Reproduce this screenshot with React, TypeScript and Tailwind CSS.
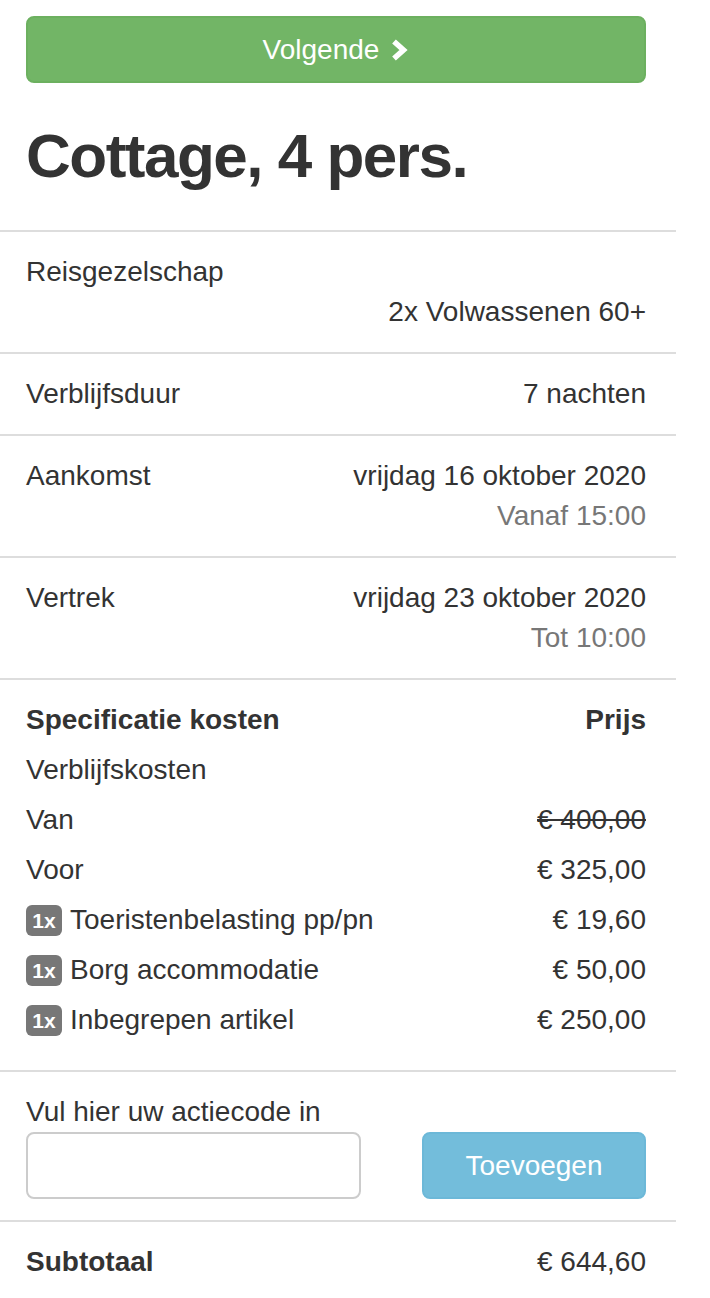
const rows = [
    { label: "Reisgezelschap", value: "2x Volwassenen 60+", stacked: true },
    { label: "Verblijfsduur", value: "7 nachten" },
    { label: "Aankomst", value: "vrijdag 16 oktober 2020", sub: "Vanaf 15:00" },
    { label: "Vertrek", value: "vrijdag 23 oktober 2020", sub: "Tot 10:00" },
];

const costs = [
    { label: "Toeristenbelasting pp/pn", price: "€ 19,60" },
    { label: "Borg accommodatie", price: "€ 50,00" },
    { label: "Inbegrepen artikel", price: "€ 250,00" },
];

function Badge() {
    return (
        <span className="inline-flex items-center justify-center w-[36px] h-[31px] mr-[8px] rounded-[6px] bg-[#777] text-white text-[21px] font-bold leading-none">
            1x
        </span>
    );
}

export default function App() {
    return (
        <div className="w-[676px] bg-white text-[#333] text-[28px] font-['Liberation_Sans','Helvetica_Neue',Arial,sans-serif]">
            <div className="pl-[26px] pr-[30px] pt-[16px]">
                <button className="flex w-full h-[67px] items-center justify-center gap-[10px] rounded-[8px] bg-[#72b566] border-2 border-[#6cb05f] text-white text-[28px]">
                    <span>Volgende</span>
                    <svg width="20" height="24" viewBox="0 0 20 24">
                        <path d="M5 3.5 L14.5 12 L5 20.5" fill="none" stroke="white" strokeWidth="5.5" strokeLinejoin="miter" />
                    </svg>
                </button>
                <h1 className="mt-[39px] mb-[40px] text-[62px] leading-[68px] font-bold tracking-[-1.5px]">Cottage, 4 pers.</h1>
            </div>

            {rows.map((row) => (
                <div key={row.label} className="border-t-2 border-[#ddd] pl-[26px] pr-[30px] py-[20px] leading-[40px]">
                    {row.stacked ? (
                        <>
                            <div>{row.label}</div>
                            <div className="text-right">{row.value}</div>
                        </>
                    ) : (
                        <div className="flex justify-between">
                            <div>{row.label}</div>
                            <div className="text-right">
                                <div>{row.value}</div>
                                {row.sub && <div className="text-[#777]">{row.sub}</div>}
                            </div>
                        </div>
                    )}
                </div>
            ))}

            {/* kosten */}
            <div className="border-t-2 border-[#ddd] pl-[26px] pr-[30px] pt-[15px] pb-[25px] leading-[50px]">
                <div className="flex justify-between font-bold">
                    <span>Specificatie kosten</span>
                    <span>Prijs</span>
                </div>
                <div>Verblijfskosten</div>
                <div className="flex justify-between">
                    <span>Van</span>
                    <span className="line-through">€ 400,00</span>
                </div>
                <div className="flex justify-between">
                    <span>Voor</span>
                    <span>€ 325,00</span>
                </div>
                {costs.map((c) => (
                    <div key={c.label} className="flex justify-between items-center">
                        <span className="flex items-center">
                            <Badge />
                            {c.label}
                        </span>
                        <span>{c.price}</span>
                    </div>
                ))}
            </div>

            <div className="border-t-2 border-[#ddd] pl-[26px] pr-[30px] pt-[20px] pb-[21px]">
                <div className="leading-[40px]">Vul hier uw actiecode in</div>
                <div className="flex justify-between">
                    <input className="w-[335px] h-[67px] rounded-[8px] border-2 border-[#ccc] px-3 outline-none" />
                    <button className="w-[224px] h-[67px] rounded-[8px] bg-[#73bddb] border-2 border-[#6cb8d8] text-white text-[28px]">
                        Toevoegen
                    </button>
                </div>
            </div>

            <div className="border-t-2 border-[#ddd] pl-[26px] pr-[30px] pt-[20px] pb-[16px] leading-[40px] flex justify-between">
                <span className="font-bold">Subtotaal</span>
                <span>€ 644,60</span>
            </div>
        </div>
    );
}
